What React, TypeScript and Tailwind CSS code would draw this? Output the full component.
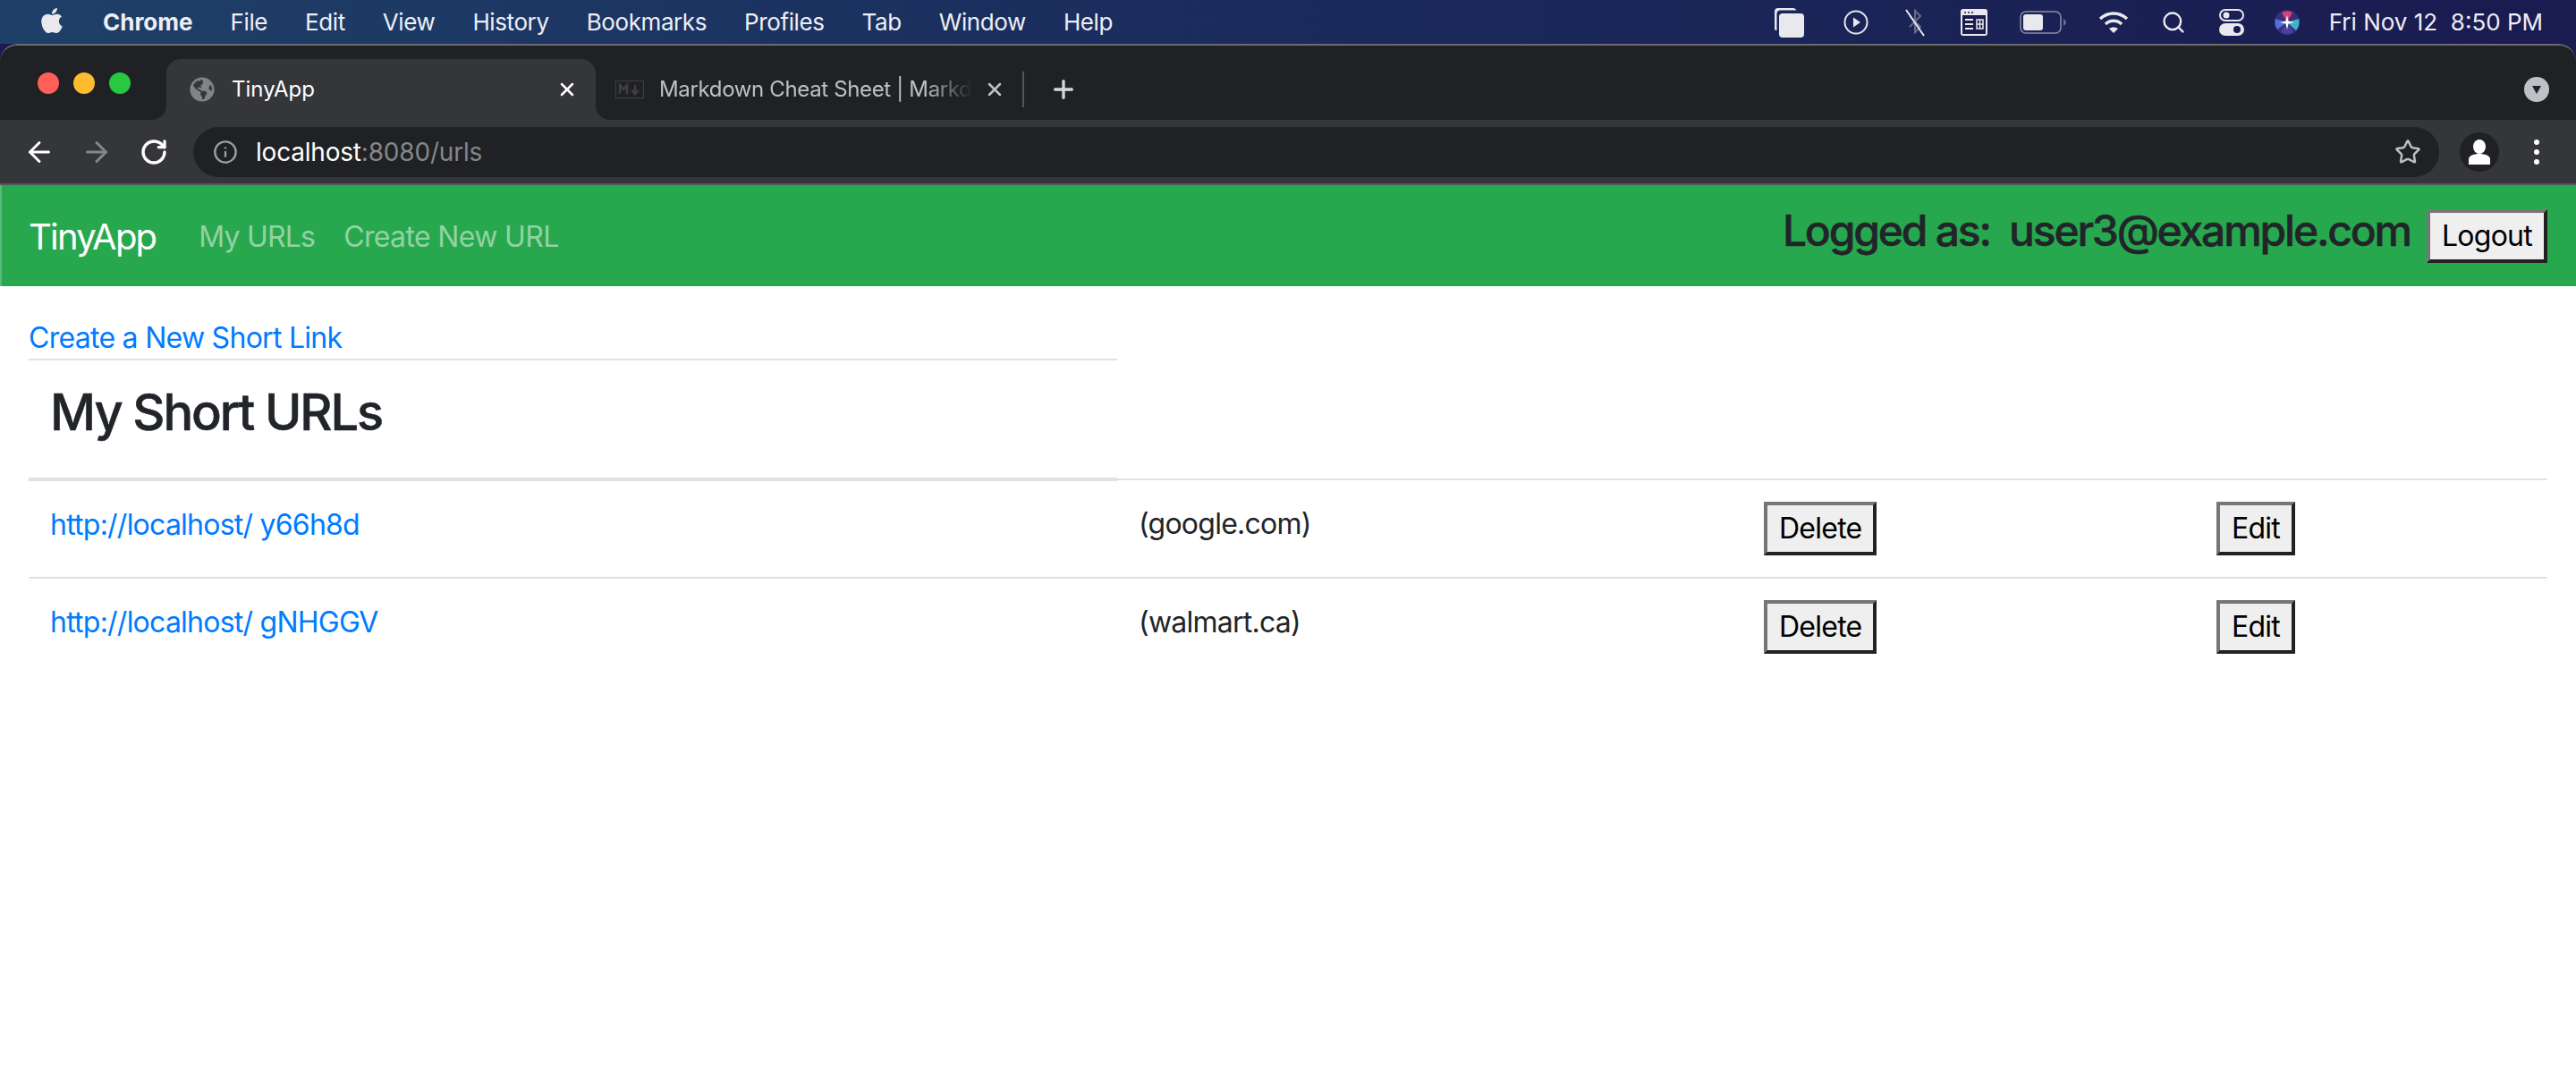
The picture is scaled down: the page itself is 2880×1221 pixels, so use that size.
import { ArrowLeft, ArrowRight, Info, Plus, RotateCw, Search, Star, X } from "lucide-react";
import { FaApple, FaGlobeAmericas } from "react-icons/fa";

const menus = ["File", "Edit", "View", "History", "Bookmarks", "Profiles", "Tab", "Window", "Help"];

const CopyIcon = () => (
  <svg width="34" height="34" viewBox="0 0 34 34" fill="#e8e8ee">
    <path d="M1 25V5a4 4 0 0 1 4-4h17a4 4 0 0 1 3.500 2.500H7A4 4 0 0 0 3.500 7.500V26A3 3 0 0 1 1 25z" />
    <rect x="6" y="7" width="28" height="27" rx="4" />
  </svg>
);

const PlayIcon = () => (
  <svg width="28" height="28" viewBox="0 0 28 28" fill="none">
    <circle cx="14" cy="14" r="12.5" stroke="#e8e8ee" strokeWidth="2" />
    <path d="M11 8.5 19 14l-8 5.5z" fill="#e8e8ee" />
  </svg>
);

const BluetoothIcon = () => (
  <svg width="24" height="32" viewBox="0 0 24 32" fill="none">
    <path d="M6 9 18 21l-6 6V3l6 6L6 21" stroke="#6a6c8c" strokeWidth="2" />
    <path d="M2 2 22 31" stroke="#e8e8ee" strokeWidth="2" />
  </svg>
);

const WindowIcon = () => (
  <svg width="30" height="30" viewBox="0 0 30 30">
    <rect width="30" height="30" rx="3" fill="#e8e8ee" />
    <rect x="2" y="7" width="26" height="21" fill="#1a1c50" />
    <circle cx="5" cy="4" r="1" fill="#1a1c50" />
    <circle cx="9" cy="4" r="1" fill="#1a1c50" />
    <circle cx="13" cy="4" r="1" fill="#1a1c50" />
    <path d="M5 12h9M5 17h9M5 22h9" stroke="#e8e8ee" strokeWidth="2" />
    <path d="M18 12h7v10h-7zM18 17h7M21.500 12v10" stroke="#e8e8ee" strokeWidth="1.500" fill="none" />
  </svg>
);

const BatteryIcon = () => (
  <svg width="52" height="26" viewBox="0 0 52 26" fill="none">
    <rect x="1" y="1" width="45" height="24" rx="6" stroke="#8c8da8" strokeWidth="1.500" />
    <rect x="4" y="4" width="22" height="18" rx="3" fill="#e8e8ee" />
    <path d="M49 9c2 1 3 3 3 4s-1 3-3 4z" fill="#6a6c8c" />
  </svg>
);

const WifiIcon = () => (
  <svg width="34" height="26" viewBox="0 0 34 26" fill="none" stroke="#e8e8ee" strokeWidth="3.500">
    <path d="M2 9c9-8 21-8 30 0" />
    <path d="M8 15c5-5 13-5 18 0" />
    <path d="M17 25l-5-5c3-2 7-2 10 0z" fill="#e8e8ee" stroke="none" />
  </svg>
);

const ControlIcon = () => (
  <svg width="28" height="30" viewBox="0 0 28 30" fill="none">
    <rect x="1" y="1" width="26" height="12" rx="6" stroke="#e8e8ee" strokeWidth="2" />
    <circle cx="8" cy="7" r="3.500" fill="#e8e8ee" />
    <rect y="16" width="28" height="14" rx="7" fill="#e8e8ee" />
    <circle cx="20" cy="23" r="4" fill="#1a1c50" />
  </svg>
);

const SiriIcon = () => (
  <svg width="28" height="30" viewBox="0 0 28 28">
    <circle cx="14" cy="14" r="14" fill="#3a2f73" />
    <path d="M14 14 8 3a14 14 0 0 1 12 0z" fill="#d6417f" />
    <path d="M14 14 27 10a14 14 0 0 1-3 13z" fill="#3fb2c9" />
    <path d="M14 14 3 22a14 14 0 0 1-2-12z" fill="#4d6fe0" />
    <path d="M14 14 21 25a14 14 0 0 1-14 0z" fill="#4a3fa8" />
    <path d="M14 6l1.500 6.500L22 14l-6.500 1.500L14 22l-1.500-6.500L6 14l6.500-1.500z" fill="#ffffff" />
  </svg>
);

const MarkdownIcon = () => (
  <svg width="32" height="20" viewBox="0 0 32 20" fill="none">
    <rect x="0.500" y="0.500" width="31" height="19" stroke="#3e3f43" />
    <path d="M5 15V5l4 5 4-5v10M22 5v9M18.500 11l3.500 4 3.500-4" stroke="#3e3f43" strokeWidth="2.500" />
  </svg>
);

const OutsetButton = ({ label }: { label: string }) => (
  <button className="block h-[60px] px-[13px] bg-[#efefef] border-4 border-t-[#767676] border-l-[#767676] border-r-[#222222] border-b-[#222222] text-[32px] leading-[44px] tracking-[-0.75px] text-black">
    {label}
  </button>
);

const rows = [
  { code: "y66h8d", site: "(google.com)" },
  { code: "gNHGGV", site: "(walmart.ca)" },
];

export default function App() {
  return (
    <div className="min-h-[1221px] bg-white font-['Inter',sans-serif]">
      {/* macOS menu bar */}
      <div className="h-[49px] flex items-center pl-[42px] pr-[37px] text-[#eeeef4] text-[26px] bg-gradient-to-r from-[#1e4068] via-[#1a2a5c] to-[#1a1b50]">
        <FaApple size={32} className="mb-1 text-[#e8e8ee]" />
        <span className="ml-[41px] font-bold">Chrome</span>
        <div className="ml-[42px] flex gap-[42px] tracking-[-0.4px]">
          {menus.map((m) => (
            <span key={m}>{m}</span>
          ))}
        </div>
        <div className="ml-auto flex items-center">
          <CopyIcon />
          <span className="ml-[44px]"><PlayIcon /></span>
          <span className="ml-[40px]"><BluetoothIcon /></span>
          <span className="ml-[39px]"><WindowIcon /></span>
          <span className="ml-[36px]"><BatteryIcon /></span>
          <span className="ml-[36px]"><WifiIcon /></span>
          <Search size={28} strokeWidth={2} className="ml-[36px]" />
          <span className="ml-[37px]"><ControlIcon /></span>
          <span className="ml-[34px]"><SiriIcon /></span>
          <span className="ml-[33px] text-[26px]">Fri Nov 12&nbsp; 8:50 PM</span>
        </div>
      </div>

      {/* browser window chrome */}
      <div className="bg-[#1a1c50]">
        <div className="flex h-[85px] bg-[#35363a] rounded-t-[20px] overflow-hidden border-t-2 border-[#6b6c70]">
          <div className="w-[186px] bg-[#202124] rounded-br-[16px] flex items-center gap-4 pl-[42px]">
            <span className="w-6 h-6 rounded-full bg-[#ff5f57]" />
            <span className="w-6 h-6 rounded-full bg-[#febc2e]" />
            <span className="w-6 h-6 rounded-full bg-[#28c840]" />
          </div>
          <div className="w-[480px] bg-[#202124] pt-[15px]">
            <div className="h-full bg-[#35363a] rounded-t-[16px] flex items-center pl-[26px] pr-[20px] text-[24px] text-white">
              <FaGlobeAmericas size={28} className="text-[#7f8487]" />
              <span className="ml-[19px]">TinyApp</span>
              <X size={24} strokeWidth={2.500} className="ml-auto" />
            </div>
          </div>
          <div className="flex-1 bg-[#202124] rounded-bl-[16px] flex items-center pt-[15px] pl-[22px] pr-[30px]">
            <MarkdownIcon />
            <span className="ml-[17px] w-[350px] overflow-hidden whitespace-nowrap text-[24px] tracking-[-0.35px] text-[#bdc1c6] [mask-image:linear-gradient(to_right,black_85%,transparent)]">
              Markdown Cheat Sheet | Markdown Guide
            </span>
            <X size={24} strokeWidth={2.500} className="ml-[13px] text-[#bdc1c6]" />
            <span className="ml-[19px] w-[2px] h-[40px] bg-[#55565a]" />
            <Plus size={32} strokeWidth={2.500} className="ml-[28px] text-[#d5d7da]" />
            <span className="ml-auto w-7 h-7 rounded-full bg-[#bdc1c6] flex items-center justify-center">
              <svg width="12" height="12" viewBox="0 0 12 12"><path d="M1 2h10L6 11z" fill="#202124" /></svg>
            </span>
          </div>
        </div>
        <div className="h-[73px] bg-[#35363a] flex items-center pt-[1px] pl-[26px] pr-[24px] border-b-2 border-[#55565a]">
          <ArrowLeft size={36} strokeWidth={2} className="text-white" />
          <ArrowRight size={36} strokeWidth={2} className="ml-[28px] text-[#85878a]" />
          <RotateCw size={32} strokeWidth={2.500} className="ml-[30px] text-white" />
          <div className="ml-[28px] w-[2511px] h-[56px] rounded-full bg-[#202124] flex items-center pl-[22px] pr-[20px] text-[28px] tracking-[-0.2px]">
            <Info size={28} strokeWidth={2} className="text-[#9aa0a6]" />
            <span className="ml-[20px] text-white">localhost</span>
            <span className="text-[#85878a]">:8080/urls</span>
            <Star size={30} strokeWidth={2} className="ml-auto text-[#bdc1c6]" />
          </div>
          <span className="ml-[23px] w-[44px] h-[44px] rounded-full bg-[#202124] flex items-center justify-center">
            <svg width="26" height="28" viewBox="0 0 26 28" fill="white">
              <ellipse cx="13" cy="8" rx="7" ry="8" />
              <path d="M1 28v-6c0-4 6-6 12-6s12 2 12 6v6z" />
            </svg>
          </span>
          <span className="ml-[39px] flex flex-col gap-[5px]">
            <span className="w-[6px] h-[6px] rounded-full bg-white" />
            <span className="w-[6px] h-[6px] rounded-full bg-white" />
            <span className="w-[6px] h-[6px] rounded-full bg-white" />
          </span>
        </div>
      </div>

      {/* page navbar */}
      <nav className="h-[113px] bg-[#27a84f] border-l-2 border-[#5cb87a] flex items-center pl-[30px] pr-[32px]">
        <span className="text-[40px] tracking-[-1.8px] text-white pt-[2px]">TinyApp</span>
        <a className="ml-[48px] text-[32px] tracking-[-0.8px] text-[#93d2a2] pt-[2px]">My URLs</a>
        <a className="ml-[32px] text-[32px] tracking-[-0.65px] text-[#93d2a2] pt-[2px]">Create New URL</a>
        <h4 className="ml-auto text-[48px] leading-[58px] mb-[12px] tracking-[-2.2px] text-[#212529] font-medium whitespace-pre [-webkit-text-stroke:0.5px_#212529]">
          Logged as:  user3@example.com
        </h4>
        <div className="ml-[18px]">
          <OutsetButton label="Logout" />
        </div>
      </nav>

      {/* page body */}
      <div className="px-[32px] pt-[33px]">
        <a className="block text-[32px] leading-[46px] pt-[2px] tracking-[-0.72px] text-[#007bff]">Create a New Short Link</a>
        <table className="w-full table-fixed">
          <colgroup>
            <col className="w-[1217px]" />
            <col className="w-[699px]" />
            <col className="w-[506px]" />
            <col className="w-[394px]" />
          </colgroup>
          <thead>
            <tr>
              <th className="p-[24px] text-left border-t-2 border-b-4 border-[#dee2e6]">
                <h1 className="text-[56px] leading-[65px] pt-[2px] mb-[16px] tracking-[-2.1px] font-medium text-[#212529] [-webkit-text-stroke:0.5px_#212529]">My Short URLs</h1>
              </th>
              <th />
              <th />
              <th />
            </tr>
          </thead>
          <tbody>
            {rows.map((row) => (
              <tr key={row.code} className="border-t-2 border-[#dee2e6] align-top text-[32px] leading-[48px] tracking-[-0.76px]">
                <td className="p-[24px] text-[#007bff]"><div className="pt-[2px] h-[48px] leading-[46px]">http://localhost/ {row.code}</div></td>
                <td className="p-[24px] text-[#212529]"><div className="pt-[2px] h-[48px] leading-[46px]">{row.site}</div></td>
                <td className="p-[24px]"><OutsetButton label="Delete" /></td>
                <td className="p-[24px]"><OutsetButton label="Edit" /></td>
              </tr>
            ))}
          </tbody>
        </table>
      </div>
    </div>
  );
}
